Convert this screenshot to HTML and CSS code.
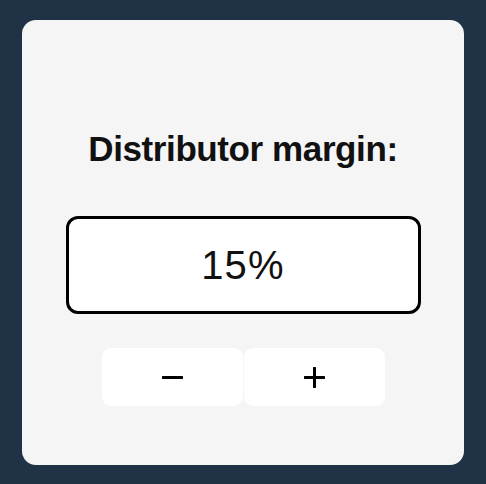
FILE: index.html
```html
<!DOCTYPE html>
<html>
<head>
<meta charset="utf-8">
<link rel="stylesheet" href="styles.css">
</head>
<body>
<div class="card">
  <h1 class="title">Distributor margin:</h1>
  <div class="value-box">15%</div>
  <div class="stepper">
    <button class="step" aria-label="decrease">
      <svg class="icon" viewBox="0 0 21 21" width="21" height="21"><path d="M1 10.5H20" stroke="#000" stroke-width="3" stroke-linecap="round"/></svg>
    </button>
    <button class="step" aria-label="increase">
      <svg class="icon" viewBox="0 0 21 21" width="21" height="21"><path d="M1 10.5H20M10.5 1V20" stroke="#000" stroke-width="3" stroke-linecap="round"/></svg>
    </button>
  </div>
</div>
</body>
</html>
```

FILE: styles.css
```css
html, body {
  margin: 0;
  padding: 0;
}
body {
  background: #203246;
  width: 486px;
  height: 484px;
  overflow: hidden;
  font-family: "Liberation Sans", Arial, Helvetica, sans-serif;
}
.card {
  box-sizing: border-box;
  margin: 20px 0 0 22px;
  width: 442px;
  height: 445px;
  background: #f5f5f5;
  border-radius: 14px;
  padding-top: 109px;
  display: flex;
  flex-direction: column;
  align-items: center;
}
.title {
  margin: 0;
  font-size: 35px;
  line-height: 40px;
  font-weight: bold;
  color: #111;
  letter-spacing: -0.4px;
}
.value-box {
  box-sizing: border-box;
  margin-top: 47px;
  width: 355px;
  height: 98px;
  border: 3px solid #000;
  border-radius: 12px;
  background: #fff;
  display: flex;
  align-items: center;
  justify-content: center;
  font-size: 40px;
  letter-spacing: 1.2px;
  color: #111;
}
.stepper {
  margin-top: 34px;
  display: flex;
  gap: 1px;
}
.step {
  width: 141px;
  height: 58px;
  border: none;
  border-radius: 9px;
  background: #fff;
  padding: 0;
  display: flex;
  align-items: center;
  justify-content: center;
}
.icon {
  display: block;
}
```
